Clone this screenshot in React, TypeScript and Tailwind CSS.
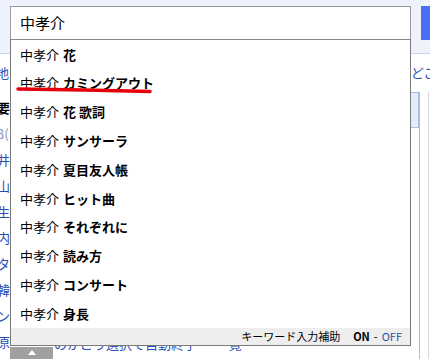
const suggestions = [
  "花",
  "カミングアウト",
  "花 歌詞",
  "サンサーラ",
  "夏目友人帳",
  "ヒット曲",
  "それぞれに",
  "読み方",
  "コンサート",
  "身長",
];

const leftBits = [
  { t: "要", c: "text-black font-bold" },
  { t: "3(", c: "text-[#8a94b8]" },
  { t: "井", c: "text-[#2b4db3]" },
  { t: "山", c: "text-[#2b4db3]" },
  { t: "生", c: "text-[#2b4db3]" },
  { t: "内", c: "text-[#2b4db3]" },
  { t: "タ", c: "text-[#2b4db3]" },
  { t: "韓", c: "text-[#2b4db3]" },
  { t: "ン", c: "text-[#2b4db3]" },
];

export default function App() {
  return (
    <div className="relative w-[430px] h-[359px] overflow-hidden bg-white font-['Noto_Sans_CJK_JP',sans-serif]">
      {/* page header with search box */}
      <div className="h-[54px] bg-[#eef2fc] border-b border-[#c9d5f1] flex items-start pt-[6px] pl-[10px] gap-[10px]">
        <div className="w-[401px] h-[34px] shrink-0 bg-white border border-[#9a9a9a] flex items-center pl-[9px] text-[15px] text-black">
          中孝介
        </div>
        <div className="w-[20px] h-[34px] shrink-0 bg-[#4a6ff3]" />
      </div>

      {/* page content behind the suggestion list */}
      <div className="flex">
        <div className="w-[10px] shrink-0 overflow-hidden text-[13px] leading-[26px]">
          <div className="-ml-[4px] mt-[6px] text-[#2b4db3]">地</div>
          <div className="mt-[9px] flex flex-col">
            {leftBits.map((b, i) => (
              <div key={i} className={`-ml-[3px] ${b.c}`}>{b.t}</div>
            ))}
            <div className="-ml-[3px] text-[#2b4db3]">原</div>
          </div>
        </div>
        <div className="w-[400px] shrink-0 overflow-hidden flex flex-col">
          <div className="h-[281px]" />
          <div className="pl-[44px] text-[13px] leading-[18px] text-[#2b4db3] whitespace-nowrap">のかごう選択で自動終了 ・ 一覧</div>
        </div>
        <div className="w-[20px] shrink-0 flex flex-col">
          <div className="pt-[9px] pl-[1px] text-[13px] text-[#3050b0] whitespace-nowrap overflow-hidden">どこ</div>
          <div className="flex mt-[9px]">
            <div className="w-[9px] h-[36px] bg-[#e4ebfb] border-y border-r border-[#a9bde9]" />
            <div className="w-[1px] bg-[#a9bde9] h-[280px]" />
            <div className="w-[8px]" />
            <div className="w-[1px] bg-[#d8d8d8] h-[270px]" />
          </div>
        </div>
      </div>

      {/* suggestion dropdown */}
      <div className="absolute left-[10px] top-[39px] w-[401px] bg-white border border-[#7a7a7a] border-t-[#8a8a8a]">
        <ul className="flex flex-col">
          {suggestions.map((s) => (
            <li key={s} className="h-[28.8px] flex items-center pl-[9px] text-[13px] text-black whitespace-nowrap">
              <span>中孝介</span>
              <span className="ml-[4px] font-bold">{s}</span>
            </li>
          ))}
        </ul>
        <div className="h-[17px] bg-[#eeeeee] flex items-center justify-end pr-[8px] text-[11px] text-black">
          <span>キーワード入力補助</span>
          <span className="ml-[13px] font-bold">ON</span>
          <span className="mx-[4px]">-</span>
          <span className="text-[#2d4ea3]">OFF</span>
        </div>
      </div>

      {/* collapse tab */}
      <div className="absolute left-[10px] top-[347px] w-[43px] h-[14px] bg-[#a0a0a0] flex justify-center pt-[3px]">
        <svg width="8" height="5" viewBox="0 0 8 5">
          <path d="M4 0 L8 5 L0 5 Z" fill="#fff" />
        </svg>
      </div>

      {/* red hand-drawn underline */}
      <svg className="absolute left-0 top-0 pointer-events-none" width="430" height="359">
        <path d="M18 89 Q 85 89.5 150 91.5" stroke="#e5000d" strokeWidth="3.5" strokeLinecap="round" fill="none" />
      </svg>
    </div>
  );
}
